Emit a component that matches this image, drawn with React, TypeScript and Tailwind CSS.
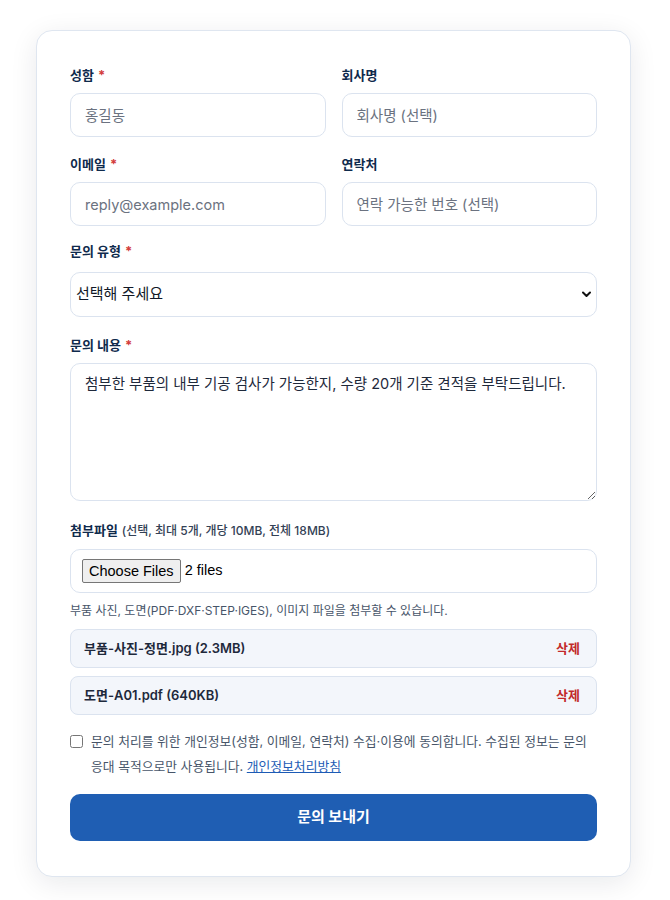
import React from 'react';

const font = { fontFamily: "Inter, 'Noto Sans CJK KR', sans-serif" };

function Label({ text, required, note }: { text: string; required?: boolean; note?: string }) {
  return (
    <div className="mb-2 text-[13px] font-bold leading-5 text-[#0f2a4c]">
      {text}
      {required && <span className="ml-1 text-[#d33b3b]">*</span>}
      {note && <span className="ml-1 text-[12px] font-medium text-[#334155]">{note}</span>}
    </div>
  );
}

const inputCls =
  'h-11 w-full rounded-[10px] border border-[#dbe3ef] bg-white px-[14px] text-[14.5px] text-[#1e293b] placeholder:text-[#6b7280] outline-none';

const files = [
  { name: '부품-사진-정면.jpg (2.3MB)' },
  { name: '도면-A01.pdf (640KB)' },
];

export default function App() {
  return (
    <div className="min-h-[900px] bg-white pl-9 pr-[39px] pt-[30px]" style={font}>
      <div className="rounded-2xl border border-[#dfe6f0] bg-white px-[33px] pb-[35px] pt-[34px] shadow-[0_6px_28px_rgba(15,23,42,0.09)]">
        <div className="grid grid-cols-2 gap-x-4 gap-y-[17px]">
          <div>
            <Label text="성함" required />
            <input className={inputCls} placeholder="홍길동" />
          </div>
          <div>
            <Label text="회사명" />
            <input className={inputCls} placeholder="회사명 (선택)" />
          </div>
          <div>
            <Label text="이메일" required />
            <input className={inputCls} placeholder="reply@example.com" />
          </div>
          <div>
            <Label text="연락처" />
            <input className={inputCls} placeholder="연락 가능한 번호 (선택)" />
          </div>
        </div>

        <div className="mt-[15px]">
          <Label text="문의 유형" required />
          <div className="relative mt-[11px]">
            <select className="h-[45px] w-full appearance-none rounded-[10px] border border-[#dbe3ef] bg-white px-[5px] text-[15px] text-[#111827] outline-none">
              <option>선택해 주세요</option>
            </select>
            <svg className="pointer-events-none absolute right-[6px] top-[19px]" width="9" height="7" viewBox="0 0 9 7">
              <path d="M1 1.5 L4.5 5 L8 1.5" fill="none" stroke="#111" strokeWidth="2" strokeLinecap="round" strokeLinejoin="round" />
            </svg>
          </div>
        </div>

        <div className="mt-[18px]">
          <Label text="문의 내용" required />
          <textarea
            className="block h-[138px] w-full rounded-[10px] border border-[#dbe3ef] bg-white px-[14px] py-[8px] text-[14.5px] leading-6 text-[#1e293b] outline-none"
            defaultValue="첨부한 부품의 내부 기공 검사가 가능한지, 수량 20개 기준 견적을 부탁드립니다."
          />
        </div>

        <div className="mt-[19px]">
          <Label text="첨부파일" note="(선택, 최대 5개, 개당 10MB, 전체 18MB)" />
          <div className="flex h-11 items-center rounded-[10px] border border-[#dbe3ef] bg-white px-[11px]">
            <span
              className="rounded-[2px] border border-[#767676] bg-[#efefef] px-[6px] py-[1px] text-[14.5px] leading-[20px] text-black"
              style={{ fontFamily: "'Liberation Sans', Arial, sans-serif" }}
            >
              Choose Files
            </span>
            <span className="ml-1 text-[14.5px] text-black" style={{ fontFamily: "'Liberation Sans', Arial, sans-serif" }}>
              2 files
            </span>
          </div>
          <p className="mt-[10px] text-[12px] leading-4 text-[#475569]">
            부품 사진, 도면(PDF·DXF·STEP·IGES), 이미지 파일을 첨부할 수 있습니다.
          </p>
          <div className="mt-[10px] flex flex-col gap-2">
            {files.map((f) => (
              <div
                key={f.name}
                className="flex h-[39px] items-center justify-between rounded-[8px] border border-[#dbe3ef] bg-[#f3f6fb] px-[13px]"
              >
                <span className="text-[13px] font-semibold text-[#1e293b]">{f.name}</span>
                <span className="pr-[3px] text-[13px] font-bold text-[#c22a2a]">삭제</span>
              </div>
            ))}
          </div>
        </div>

        <label className="mt-[14px] flex items-start gap-[8px] break-keep text-[12.8px] leading-[25px] text-[#475569]">
          <input type="checkbox" className="mt-[6px] h-[13px] w-[13px] shrink-0" />
          <span>
            문의 처리를 위한 개인정보(성함, 이메일, 연락처) 수집·이용에 동의합니다. 수집된 정보는 문의 응대 목적으로만 사용됩니다.{' '}
            <a className="text-[#1d5bb5] underline">개인정보처리방침</a>
          </span>
        </label>

        <button className="mt-[15px] h-[47px] w-full rounded-[10px] bg-[#1f5eb3] text-[15px] font-bold text-white">
          문의 보내기
        </button>
      </div>
    </div>
  );
}
